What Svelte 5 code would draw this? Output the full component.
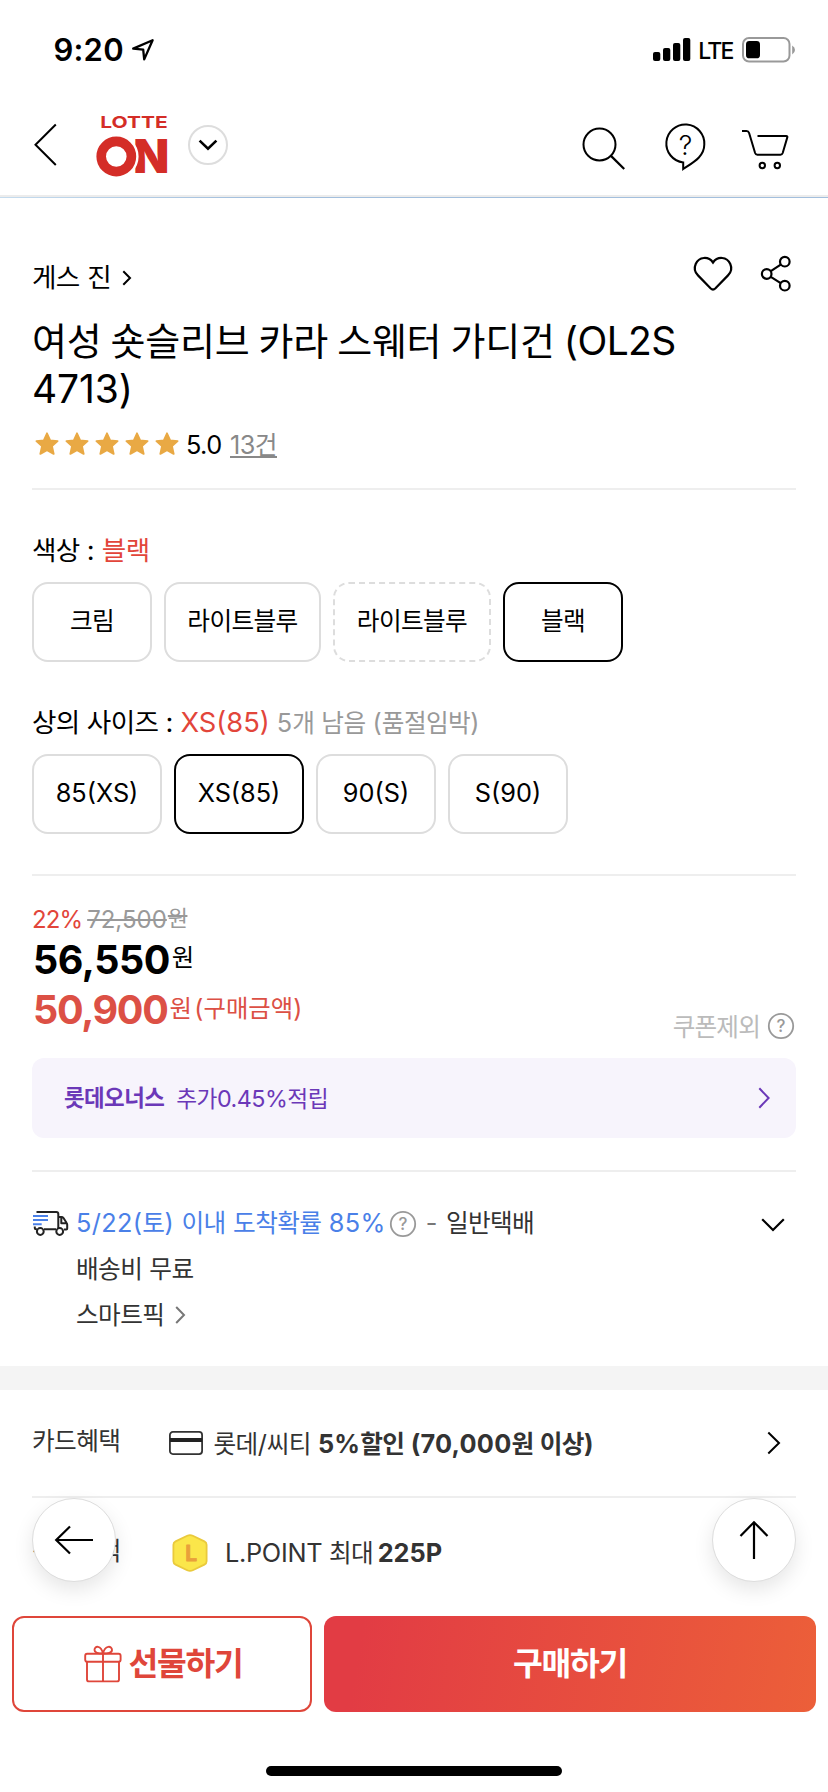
<script>
  // Splits a label into Hangul and non-Hangul runs so each can use its own metrics.
  const runs = (s) =>
    (s.match(/[\uac00-\ud7a3]+|[^\uac00-\ud7a3]+/g) ?? []).map((t) => ({
      t,
      ko: /[\uac00-\ud7a3]/.test(t)
    }));

  const colors = [
    { label: '크림', w: 120 },
    { label: '라이트블루', w: 157 },
    { label: '라이트블루', w: 158, soldOut: true },
    { label: '블랙', w: 120, on: true }
  ];
  const sizes = [
    { label: '85(XS)', w: 130 },
    { label: 'XS(85)', w: 130, on: true },
    { label: '90(S)', w: 120 },
    { label: 'S(90)', w: 120 }
  ];
</script>

{#snippet txt(s)}{#each runs(s) as r}{#if r.ko}<span class="ko">{r.t}</span>{:else}{r.t}{/if}{/each}{/snippet}

{#snippet help()}
  <svg class="help" width="28" height="28" viewBox="0 0 28 28">
    <circle cx="14" cy="14" r="12.2" fill="none" stroke="#999" stroke-width="1.8" />
    <text x="14" y="20" text-anchor="middle" font-size="17" font-weight="500" fill="#999">?</text>
  </svg>
{/snippet}

<div class="page">
  <header>
    <div class="status">
      <span class="time">9:20</span>
      <svg class="loc" width="24" height="24" viewBox="0 0 24 24">
        <path d="M2.2 10.6 21.6 2.2 13.2 21.4 12.2 11.6z" fill="none" stroke="#000" stroke-width="2.3" stroke-linejoin="round" />
      </svg>
      <span class="grow"></span>
      <svg width="38" height="24" viewBox="0 0 38 24">
        <rect x="0" y="14" width="7.3" height="9" rx="2" />
        <rect x="10" y="10" width="7.3" height="13" rx="2" />
        <rect x="20" y="5" width="7.3" height="18" rx="2" />
        <rect x="30" y="0" width="7.3" height="23" rx="2" />
      </svg>
      <span class="lte">LTE</span>
      <svg width="54" height="26" viewBox="0 0 54 26">
        <rect x="1" y="1" width="46.5" height="23.5" rx="6" fill="none" stroke="#999" stroke-width="2" />
        <rect x="4" y="4" width="14" height="17.3" rx="3.4" />
        <path d="M50.2 8.6q2.8 1.6 2.8 4.4t-2.8 4.4z" fill="#999" />
      </svg>
    </div>
    <nav>
      <svg class="back" width="24" height="44" viewBox="0 0 24 44">
        <path d="M21.8 1.5 1.5 21.8 21.8 42" fill="none" stroke="#000" stroke-width="2" />
      </svg>
      <svg class="logo" width="74" height="64" viewBox="0 0 74 64">
        <g fill="#d42d27">
          <text x="4.200" y="14.500" font-size="16.5" font-weight="700" textLength="67.500" lengthAdjust="spacingAndGlyphs">LOTTE</text>
          <text x="37.2" y="60" font-size="46.6" font-weight="900" textLength="36" lengthAdjust="spacingAndGlyphs">N</text>
        </g>
        <circle cx="20.3" cy="43.5" r="16" fill="#fff" stroke="#fff" stroke-width="12.6" />
        <circle cx="20.3" cy="43.5" r="15.1" fill="none" stroke="#d42d27" stroke-width="9.6" />
      </svg>
      <svg class="drop" width="40" height="40" viewBox="0 0 40 40">
        <circle cx="20" cy="20" r="19" fill="none" stroke="#ddd" stroke-width="2" />
        <path d="M11.6 15.6 20 23.8 28.4 15.6" fill="none" stroke="#000" stroke-width="2.6" />
      </svg>
      <span class="grow"></span>
      <svg class="find" width="44" height="46" viewBox="0 0 44 46">
        <circle cx="17.5" cy="21.5" r="16" fill="none" stroke="#000" stroke-width="2" />
        <path d="M28.7 32.6 42.2 46" stroke="#000" stroke-width="2.2" />
      </svg>
      <svg class="ask" width="42" height="46" viewBox="0 0 42 46">
        <path d="M19.2 45v-6.6A19 19 0 1 1 40.3 20.6C40.3 33 28.6 38.6 19.2 45z" fill="none" stroke="#000" stroke-width="2" />
        <text x="21.5" y="31" text-anchor="middle" font-size="27" font-weight="300">?</text>
      </svg>
      <svg class="cart" width="48" height="42" viewBox="0 0 48 42">
        <g fill="none" stroke="#000" stroke-width="2" stroke-linejoin="round">
          <path d="M1 2h4.5q2 0 2.6 2l6 20q.6 1.700 2.200 1.700h23.200q1.600 0 2.200-1.700l4.600-15.600q.3-1.400-1-1.400H16.500" />
          <circle cx="21.300" cy="36.500" r="2.700" />
          <circle cx="36.300" cy="36.500" r="2.700" />
        </g>
      </svg>
    </nav>
    <div class="edge"></div>
    <div class="progress"></div>
  </header>

  <main>
    <section>
      <div class="brand">
        <span>{@render txt('게스 진')}</span>
        <svg class="go" width="10" height="16" viewBox="0 0 10 16">
          <path d="M1.300 1.300 8 8 1.300 14.700" fill="none" stroke="#000" stroke-width="2" />
        </svg>
        <span class="grow"></span>
        <svg class="heart" width="40" height="36" viewBox="0 0 40 36">
          <path d="M20 6.500C15.500 0 6 .5 2.700 8c-1.700 4-.9 8.300 2.300 11.400l12.500 12.900q2.500 2.400 5 0L35 19.400C38.200 16.300 39 12 37.300 8 34 .5 24.500 0 20 6.500z" fill="none" stroke="#000" stroke-width="2.200" />
        </svg>
        <svg class="share" width="31" height="36" viewBox="0 0 31 36">
          <g fill="none" stroke="#000" stroke-width="2.200">
            <circle cx="23.800" cy="5.700" r="4.800" />
            <circle cx="5.700" cy="18" r="4.800" />
            <circle cx="23.800" cy="29.700" r="4.800" />
            <path d="M9.800 15.200 19.700 8.600M9.800 20.900 19.700 27.100" />
          </g>
        </svg>
      </div>
      <h1><span>{@render txt('여성 숏슬리브 카라 스웨터 가디건 (OL2S')}</span><br /><span class="code">4713)</span></h1>
      <div class="rating">
        {#each Array(5) as _}
          <svg width="30" height="26" viewBox="0 0 30 26">
            <path d="M15 2.300 18.200 9.300 25.600 10.100 20 15.200 21.700 22.900 15 19.200 8.300 22.900 10 15.200 4.400 10.100 11.800 9.300z" fill="#e9a944" stroke="#e9a944" stroke-width="1.800" stroke-linejoin="round" />
          </svg>
        {/each}
        <span class="score">5.0</span>
        <span class="reviews">{@render txt('13건')}</span>
      </div>
      <hr />

      <div class="label">{@render txt('색상 : ')}<em>{@render txt('블랙')}</em></div>
      <div class="opts">
        {#each colors as o}
          <button class:on={o.on} class:sold={o.soldOut} style="width:{o.w}px">{@render txt(o.label)}</button>
        {/each}
      </div>
      <div class="label">
        {@render txt('상의 사이즈 : ')}<em>XS(85)</em><small>{@render txt('5개 남음 (품절임박)')}</small>
      </div>
      <div class="opts">
        {#each sizes as o}
          <button class:on={o.on} style="width:{o.w}px">{@render txt(o.label)}</button>
        {/each}
      </div>
      <hr />

      <div class="price">
        <div>
          <div class="was"><em>22%</em><s>72,500<i>{@render txt('원')}</i></s></div>
          <div class="now"><b>56,550</b><span>{@render txt('원')}</span></div>
          <div class="now buy"><b>50,900</b><span>{@render txt('원')}</span><span class="note">{@render txt('(구매금액)')}</span></div>
        </div>
        <div class="coupon"><span>{@render txt('쿠폰제외')}</span>{@render help()}</div>
      </div>

      <div class="owners">
        <b>{@render txt('롯데오너스')}</b>
        <span class="earn">{@render txt('추가0.45%적립')}</span>
        <span class="grow"></span>
        <svg width="12" height="22" viewBox="0 0 12 22">
          <path d="M1.300 1.300 10.600 11 1.300 20.700" fill="none" stroke="#6b38b8" stroke-width="2" />
        </svg>
      </div>
      <hr class="h32" />

      <div class="ship">
        <svg class="truck" width="36" height="28" viewBox="0 0 36 28">
          <g fill="none" stroke="#222" stroke-width="2" stroke-linejoin="round">
            <path d="M3.500 2h19.800q2 0 2 2V18M11 19.300h12M1.800 16.500v1.300q0 1.500 1.500 1.500h.6" />
            <path d="M25.300 7h3.200q1.200 0 2 1l3 4.800q.7 1 .7 2v3.700q0 1-1 1h-2.400M28.300 7.500v5.800h5.500" />
            <circle cx="7.300" cy="21.500" r="3.400" />
            <circle cx="26.700" cy="21.500" r="3.400" />
          </g>
          <path d="M0 6h15M0 10h15M0 14.300h8.700" stroke="#4a80e8" stroke-width="1.900" />
        </svg>
        <div>
          <div class="line">
            <span class="eta">{@render txt('5/22(토) 이내 도착확률 85%')}</span>{@render help()}<span class="dash">-</span><span>{@render txt('일반택배')}</span>
          </div>
          <div class="line"><span>{@render txt('배송비 무료')}</span></div>
          <div class="line">
            <span>{@render txt('스마트픽')}</span>
            <svg class="pick" width="11" height="18" viewBox="0 0 11 18">
              <path d="M1.200 1 9 9 1.200 17" fill="none" stroke="#777" stroke-width="2" />
            </svg>
          </div>
        </div>
        <svg class="fold" width="24" height="14" viewBox="0 0 24 14">
          <path d="M1.200 1.200 12 12 22.800 1.200" fill="none" stroke="#000" stroke-width="2.200" />
        </svg>
      </div>
    </section>

    <div class="band"></div>

    <section class="benefits">
      <div class="row">
        <span class="name">{@render txt('카드혜택')}</span>
        <svg class="card" width="34" height="24" viewBox="0 0 34 24">
          <rect x=".9" y=".9" width="32.200" height="22.200" rx="3" fill="none" stroke="#333" stroke-width="1.800" />
          <path d="M1 9h32" stroke="#222" stroke-width="4" />
        </svg>
        <span>{@render txt('롯데/씨티')}</span>
        <b class="deal">{@render txt('5%할인 (70,000원 이상)')}</b>
        <span class="grow"></span>
        <svg class="more" width="14" height="24" viewBox="0 0 14 24">
          <path d="M1.300 1.500 12 12 1.300 22.500" fill="none" stroke="#000" stroke-width="2" />
        </svg>
      </div>
      <hr class="flat" />
      <div class="row second">
        <span class="name">{@render txt('적립혜택')}</span>
        <svg class="lp" width="36" height="38" viewBox="0 0 36 38">
          <path d="M15.200 1.800q2.800-1.400 5.600 0l11.600 5.600q2.200 1.100 2.200 3.400v16.400q0 2.300-2.200 3.400l-11.600 5.600q-2.800 1.400-5.600 0L3.600 30.600q-2.200-1.100-2.200-3.400V10.800q0-2.300 2.200-3.400z" fill="#fbe64a" stroke="#eaca3c" stroke-width="1.800" />
          <text x="19.200" y="27" text-anchor="middle" font-size="21" font-weight="700" fill="#e9a03a" stroke="#e9a03a" stroke-width=".8" stroke-linejoin="round">L</text>
        </svg>
        <span class="pt">{@render txt('L.POINT 최대')}</span>
        <b class="pts">225P</b>
      </div>
    </section>

    <div class="fab left">
      <svg width="40" height="30" viewBox="0 0 40 30">
        <path d="M39 15H2M16 1.500 2.200 15 16 28.500" fill="none" stroke="#000" stroke-width="2.200" />
      </svg>
    </div>
    <div class="fab right">
      <svg width="30" height="40" viewBox="0 0 30 40">
        <path d="M15 39V2M1.500 16 15 2.200 28.500 16" fill="none" stroke="#000" stroke-width="2.200" />
      </svg>
    </div>
  </main>

  <footer>
    <div class="cta">
      <div class="gift">
        <svg width="38" height="38" viewBox="0 0 38 38">
          <g fill="none" stroke="#df463a" stroke-width="1.900" stroke-linejoin="round">
            <rect x="1.200" y="8.800" width="35.400" height="8" rx="2" />
            <path d="M3 16.800v17.600q0 2 2 2h28q2 0 2-2V16.800M19 8.500V36.400" />
            <path d="M19 8.500C16 8.500 10.500 8.500 10.500 5c0-4.500 6.500-5 8.500 3.500C21 0 28 .5 28 5c0 3.500-6 3.500-9 3.500z" />
          </g>
        </svg>
        <span class="send">{@render txt('선물하기')}</span>
      </div>
      <div class="purchase">{@render txt('구매하기')}</div>
    </div>
    <div class="home"></div>
  </footer>
</div>

<style>
  :global(body) { background: #fff; }
  .page {
    display: flex;
    flex-direction: column;
    width: 828px;
    height: 1792px;
    overflow: hidden;
    background: #fff;
    color: #000;
    font-family: Inter, "Noto Sans CJK KR", sans-serif;
    font-size: 25.3px;
  }
  .page :global(*) { box-sizing: border-box; }
  svg { display: block; flex: none; overflow: visible; }
  .ko {
    font-family: "Noto Sans CJK KR", sans-serif;
    font-size: .975em;
    line-height: 0;
    letter-spacing: var(--ko, -.025em);
  }
  .grow { flex: 1; }
  em, i { font-style: normal; }
  span, b, em, small, s { white-space: pre; }

  .status { display: flex; align-items: center; height: 98px; padding: 2px 32px 0 53.500px; }
  .time { font-size: 31px; font-weight: 600; line-height: 40px; letter-spacing: .2px; }
  .loc { margin-left: 7px; }
  .lte { margin: 2px 9.500px 0 7px; font-size: 23px; font-weight: 500; letter-spacing: -1.800px; }
  nav { display: flex; align-items: center; height: 97px; padding: 0 39px 3px 34px; }
  .back { margin-right: 38px; }
  .logo { margin-right: 18px; }
  .find { margin-top: 2px; }
  .ask { margin: 3px 35px 0 38px; }
  .cart { margin-top: 9px; }
  .edge { height: 2px; background: #ececec; }
  .progress { height: 1px; background: linear-gradient(90deg, #c6dcee, #a3bfdd 30%); }

  main { position: relative; flex: 1; min-height: 0; }
  section { padding: 0 32px; }
  hr { height: 2px; margin: 40px 0 0; border: 0; background: #eee; }
  .brand { display: flex; align-items: flex-start; height: 44px; margin-top: 58px; font-size: 27.300px; line-height: 44px; }
  .go { margin: 14px 0 0 10.500px; }
  .heart { margin-right: 28px; }
  .share { margin-right: 4px; }
  h1 { margin: 17px 0 0; font-size: 39px; font-weight: 400; line-height: 48px; letter-spacing: -.600px; word-spacing: -1.200px; --ko: -.007em; }
  .code { letter-spacing: -.100px; }
  .rating { display: flex; align-items: center; height: 40px; margin-top: 11px; }
  .score { margin-left: 4px; letter-spacing: -.6px; }
  .reviews { margin-left: 8.500px; height: 28px; border-bottom: 2px solid #888; color: #888; line-height: 29px; letter-spacing: -.6px; }
  .rating + hr { margin-top: 24px; }
  .label { height: 40px; margin-top: 40px; padding-top: 1px; font-size: 27.300px; line-height: 40px; word-spacing: -.500px; }
  .label em { color: #e2453a; }
  .label small { margin-left: 7px; font-size: 25.300px; color: #999; word-spacing: 0; }
  .opts { display: flex; gap: 12px; margin-top: 12px; }
  .opts button {
    height: 80px;
    padding: 0 0 3px;
    border: 2px solid #ddd;
    border-radius: 16px;
    background: #fff;
    color: #000;
    font: inherit;
    line-height: 40px;
    white-space: nowrap;
  }
  .opts .on { border-color: #000; }
  .opts .sold { border-style: dashed; }

  .price { display: flex; justify-content: space-between; height: 168px; padding-top: 29px; }
  .was { height: 30px; font-size: 24px; line-height: 30px; }
  .was em { color: #e2453a; letter-spacing: -.9px; }
  .was s { margin-left: 5px; color: #999; }
  .was i { position: relative; top: -2px; margin-left: 1px; font-size: 22.500px; }
  .now { display: flex; height: 50px; padding-left: 1px; line-height: 50px; }
  .now b { font-size: 39.500px; font-weight: 700; letter-spacing: -.500px; }
  .now span { margin-left: 2px; font-size: 25px; line-height: 45px; }
  .now .ko { margin: 0; font-size: .975em; line-height: 0; }
  .buy { color: #dc5045; }
  .buy b { letter-spacing: -1.300px; }
  .buy span { line-height: 46px; }
  .now .note { margin-left: 3px; --ko: 0; }
  .coupon { display: flex; align-items: center; align-self: flex-end; gap: 7px; height: 36px; padding-right: 1px; color: #bbb; --ko: -.035em; }

  .owners { display: flex; align-items: center; height: 80px; margin-top: 14px; padding: 0 26px 0 32px; border-radius: 12px; background: #f7f4fc; color: #6b38b8; font-size: 23px; }
  .owners b { margin-right: 12px; }
  .earn { font-size: 23.300px; letter-spacing: -.500px; --ko: -.025em; }
  .h32 { margin-top: 32px; }
  .ship { display: flex; margin-top: 28px; height: 166px; color: #333; }
  .truck { margin: 10px 7px 0 1px; }
  .line { display: flex; align-items: center; height: 46px; line-height: 46px; }
  .eta { color: #4a80e8; margin-right: 3px; letter-spacing: .350px; }
  .line .help { position: relative; top: 1px; }
  .dash { margin: 0 8.500px 0 9px; color: #777; }
  .pick { margin-left: 10.500px; }
  .fold { margin: 18px 11px 0 auto; }
  .band { height: 24px; background: #f4f4f4; }
  .row { display: flex; align-items: center; height: 106px; color: #333; }
  .row .name { width: 137px; margin-top: -5px; }
  .card { margin-right: 10.500px; }
  .deal { margin-left: 7px; letter-spacing: .250px; }
  .more { margin-right: 15px; }
  .flat { margin: 0; }
  .second { padding-top: 3px; }
  .lp { margin: 0 17.500px 0 2.500px; }
  .pt { letter-spacing: -.300px; }
  .pts { margin-left: 4.500px; }

  .fab {
    position: absolute;
    top: 1300px;
    display: flex;
    align-items: center;
    justify-content: center;
    width: 84px;
    height: 84px;
    border: 1px solid #ddd;
    border-radius: 50%;
    background: #fff;
    box-shadow: 0 8px 20px rgba(0, 0, 0, .1);
  }
  .left { left: 32px; }
  .right { right: 32px; }

  footer { height: 188px; padding: 12px 12px 0; }
  .cta { display: flex; gap: 12px; height: 96px; font-size: 33.200px; font-weight: 700; --ko: -.038em; }
  .gift { display: flex; align-items: center; justify-content: center; gap: 6px; width: 300px; padding-left: 3px; border: 2px solid #df463a; border-radius: 12px; color: #df463a; }
  .send { margin-top: -3px; }
  .purchase { flex: 1; border-radius: 12px; background: linear-gradient(100deg, #e23c44 8%, #ec5f39); color: #fff; text-align: center; line-height: 94px; }
  .home { width: 296px; height: 10px; margin: 54px auto 0; border-radius: 5px; background: #000; }
</style>
